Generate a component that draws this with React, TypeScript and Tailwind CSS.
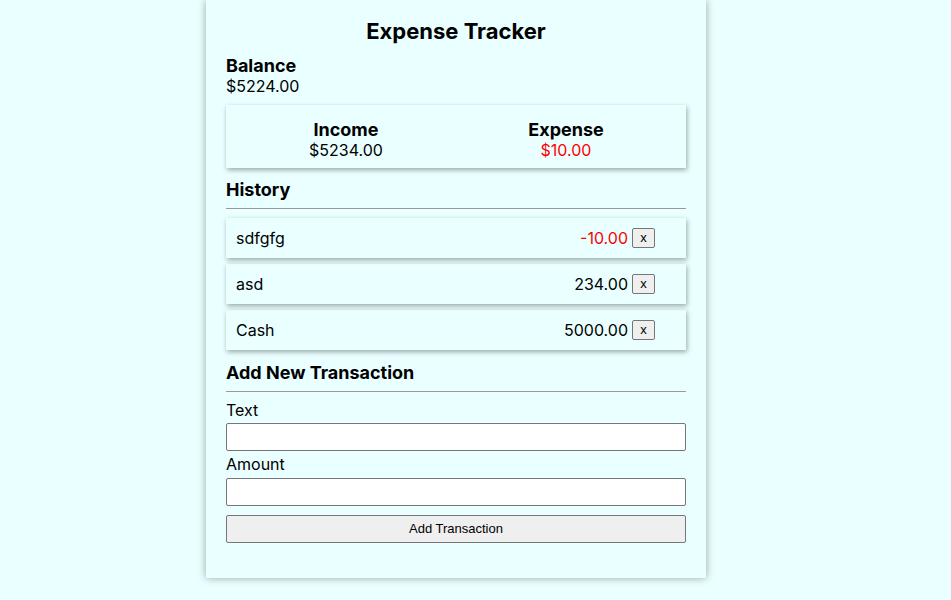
import React, { useState } from 'react';

type Tx = { id: number; text: string; amount: number };

const initial: Tx[] = [
    { id: 1, text: 'sdfgfg', amount: -10 },
    { id: 2, text: 'asd', amount: 234 },
    { id: 3, text: 'Cash', amount: 5000 },
];

const App: React.FC = () => {
    const [items, setItems] = useState<Tx[]>(initial);
    const [text, setText] = useState('');
    const [amount, setAmount] = useState('');

    const income = items.filter((t) => t.amount > 0).reduce((s, t) => s + t.amount, 0);
    const expense = items.filter((t) => t.amount < 0).reduce((s, t) => s - t.amount, 0);
    const balance = income - expense;

    const add = () => {
        const n = parseFloat(amount);
        if (!text || isNaN(n)) return;
        setItems([{ id: Date.now(), text, amount: n }, ...items]);
        setText('');
        setAmount('');
    };

    return (
        <div className="min-h-[600px] bg-[#eaffff] font-['Inter','Noto_Sans',sans-serif] text-black">
            <div className="ml-[206px] w-[500px] bg-[#eaffff] px-5 pt-[16px] pb-[35px] shadow-[0_0_8px_rgba(0,0,0,0.35)]">
                <h1 className="text-center text-[22px] font-bold leading-[30px]">Expense Tracker</h1>

                <div className="mt-[10px]">
                    <h2 className="text-[18px] font-bold leading-[20px]">Balance</h2>
                    <p className="text-[16px] leading-[20px]">${balance.toFixed(2)}</p>
                </div>

                <div className="mt-[9px] grid grid-cols-2 px-[10px] pt-[15px] pb-[8px] shadow-[1px_2px_5px_rgba(0,0,0,0.35)]">
                    <div className="text-center">
                        <h3 className="text-[18px] font-bold leading-[20px]">Income</h3>
                        <p className="text-[16px] leading-[20px]">${income.toFixed(2)}</p>
                    </div>
                    <div className="text-center">
                        <h3 className="text-[18px] font-bold leading-[20px]">Expense</h3>
                        <p className="text-[16px] leading-[20px] text-[#ff0000]">${expense.toFixed(2)}</p>
                    </div>
                </div>

                <h3 className="mt-[12px] text-[18px] font-bold leading-[20px]">History</h3>
                <hr className="mt-[8px] border-t border-[#999]" />

                <ul className="mt-[9px] flex flex-col gap-[6px]">
                    {items.map((t) => (
                        <li
                            key={t.id}
                            className="flex h-[40px] items-center justify-between pl-[10px] pr-[31px] pb-[1px] shadow-[1px_2px_5px_rgba(0,0,0,0.35)]"
                        >
                            <span className="text-[16px]">{t.text}</span>
                            <span className="flex items-center gap-[4px]">
                                <span className={`text-[16px] ${t.amount < 0 ? 'text-[#ff0000]' : ''}`}>
                                    {t.amount.toFixed(2)}
                                </span>
                                <button
                                    onClick={() => setItems(items.filter((x) => x.id !== t.id))}
                                    className="flex h-[20px] w-[23px] items-center justify-center rounded-[2px] border border-[#767676] bg-[#efefef] font-['Liberation_Sans',Arial,sans-serif] text-[13px] leading-none"
                                >
                                    x
                                </button>
                            </span>
                        </li>
                    ))}
                </ul>

                <h3 className="mt-[13px] text-[18px] font-bold leading-[20px]">Add New Transaction</h3>
                <hr className="mt-[8px] border-t border-[#999]" />

                <label className="mt-[8px] block text-[16px] leading-[20px]">Text</label>
                <input
                    value={text}
                    onChange={(e) => setText(e.target.value)}
                    className="mt-[3px] block h-[28px] w-full rounded-[2px] border border-[#767676] bg-white px-1 outline-none"
                />
                <label className="block text-[16px] leading-[27px]">Amount</label>
                <input
                    value={amount}
                    onChange={(e) => setAmount(e.target.value)}
                    className="block h-[28px] w-full rounded-[2px] border border-[#767676] bg-white px-1 outline-none"
                />
                <button
                    onClick={add}
                    className="mt-[9px] block h-[28px] w-full rounded-[2px] border border-[#767676] bg-[#efefef] font-['Liberation_Sans',Arial,sans-serif] text-[13px]"
                >
                    Add Transaction
                </button>
            </div>
        </div>
    );
};

export default App;
